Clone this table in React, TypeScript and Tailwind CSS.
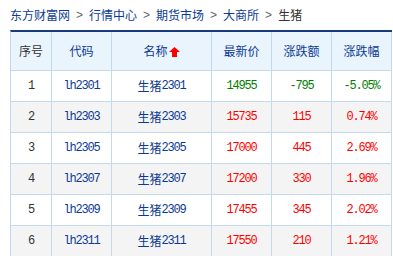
import React from "react";

const rows = [
  { n: 1, code: "lh2301", num: "2301", price: "14955", chg: "-795", pct: "-5.05%", up: false },
  { n: 2, code: "lh2303", num: "2303", price: "15735", chg: "115", pct: "0.74%", up: true },
  { n: 3, code: "lh2305", num: "2305", price: "17000", chg: "445", pct: "2.69%", up: true },
  { n: 4, code: "lh2307", num: "2307", price: "17200", chg: "330", pct: "1.96%", up: true },
  { n: 5, code: "lh2309", num: "2309", price: "17455", chg: "345", pct: "2.02%", up: true },
  { n: 6, code: "lh2311", num: "2311", price: "17550", chg: "210", pct: "1.21%", up: true },
];

const cjk = { fontFamily: '"Noto Sans CJK SC", "Noto Sans", sans-serif' };
const mono = { fontFamily: '"Liberation Mono", "Noto Sans CJK SC", monospace' };

function Sep() {
  return (
    <span className="mx-[6px] text-[#666]" style={{ fontFamily: '"Liberation Sans", sans-serif' }}>
      &gt;
    </span>
  );
}

export default function App() {
  return (
    <div className="w-[393px] h-[256px] bg-white overflow-hidden pl-[10px]">
      <div className="h-[30px] flex items-center text-[12px] leading-none text-[#0b3a94]" style={cjk}>
        <span>东方财富网</span>
        <Sep />
        <span>行情中心</span>
        <Sep />
        <span>期货市场</span>
        <Sep />
        <span>大商所</span>
        <Sep />
        <span className="text-[#333]">生猪</span>
      </div>
      <div className="w-[382px] border-t-2 border-[#1a3a7e] border-l border-l-[#c2d9ee]">
        <div className="flex h-[39px] bg-[#eaf4fd] border-b border-[#c2d9ee] text-[12px] text-[#0b3a94]" style={cjk}>
          <div className="w-[41px] border-r border-[#c2d9ee] flex items-center justify-center text-[#333]">序号</div>
          <div className="w-[60px] border-r border-[#c2d9ee] flex items-center justify-center">代码</div>
          <div className="w-[100px] border-r border-[#c2d9ee] flex items-center justify-center">
            <span>名称</span>
            <svg width="11" height="10" viewBox="0 0 11 10" className="ml-[1px] mt-[1px]">
              <path d="M5.5 0 L11 5 L8 5 L8 10 L3 10 L3 5 L0 5 Z" fill="#ff0000" />
            </svg>
          </div>
          <div className="w-[60px] border-r border-[#c2d9ee] flex items-center justify-center">最新价</div>
          <div className="w-[60px] border-r border-[#c2d9ee] flex items-center justify-center">涨跌额</div>
          <div className="w-[60px] border-r border-[#c2d9ee] flex items-center justify-center">涨跌幅</div>
        </div>
        {rows.map((r, i) => {
          const color = r.up ? "text-[#ff0000]" : "text-[#008000]";
          return (
            <div
              key={r.code}
              className={`flex h-[31px] border-b border-[#c2d9ee] text-[12px] ${i % 2 === 1 ? "bg-[#f4f4f4]" : "bg-white"}`}
            >
              <div className="w-[41px] border-r border-[#c2d9ee] flex items-center justify-center text-[#333] tracking-[-1.2px]" style={mono}>{r.n}</div>
              <div className="w-[60px] border-r border-[#c2d9ee] flex items-center justify-center text-[#0b3a94] tracking-[-1.2px]" style={mono}>{r.code}</div>
              <div className="w-[100px] border-r border-[#c2d9ee] flex items-center justify-center text-[#0b3a94]">
                <span style={cjk}>生猪</span>
                <span className="tracking-[-1.2px]" style={mono}>{r.num}</span>
              </div>
              <div className={`w-[60px] border-r border-[#c2d9ee] flex items-center justify-center tracking-[-1.2px] ${color}`} style={mono}>{r.price}</div>
              <div className={`w-[60px] border-r border-[#c2d9ee] flex items-center justify-center tracking-[-1.2px] ${color}`} style={mono}>{r.chg}</div>
              <div className={`w-[60px] border-r border-[#c2d9ee] flex items-center justify-center tracking-[-1.2px] ${color}`} style={mono}>{r.pct}</div>
            </div>
          );
        })}
      </div>
    </div>
  );
}
